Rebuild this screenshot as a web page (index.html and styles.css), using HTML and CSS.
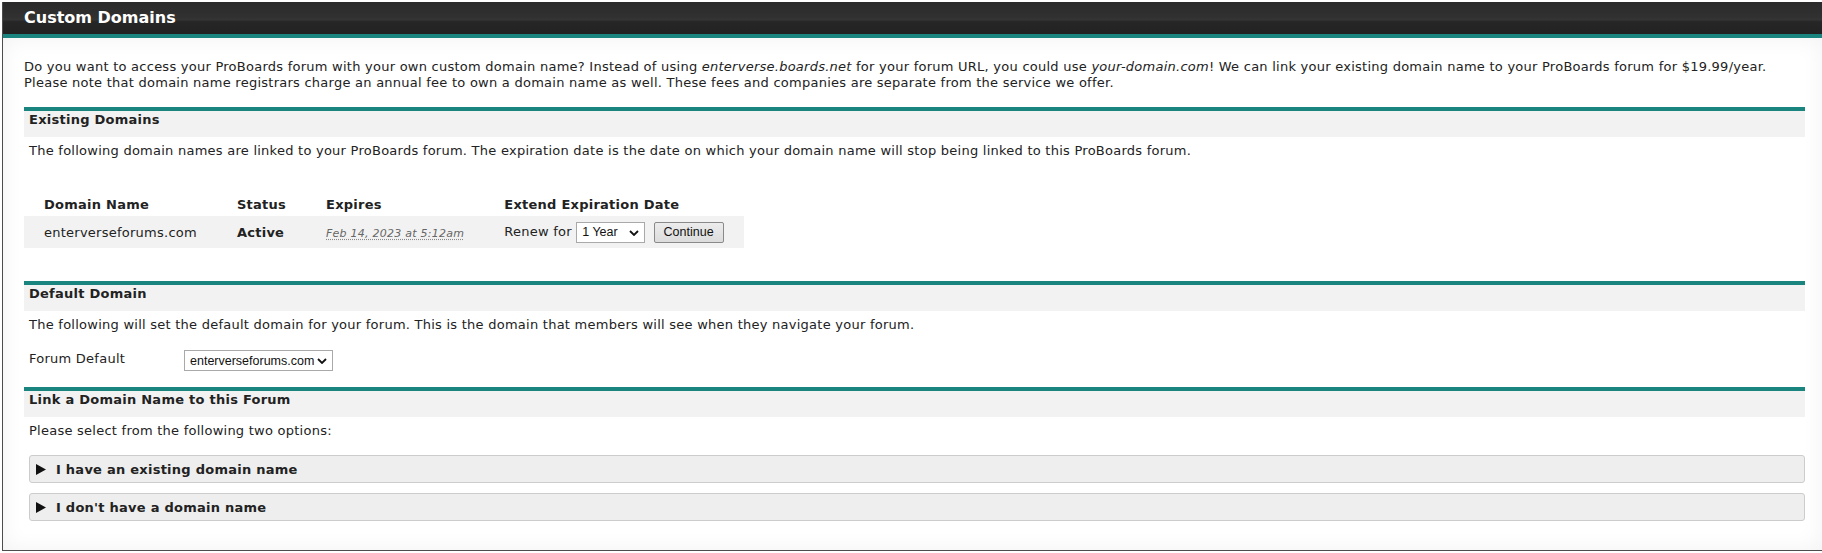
FILE: index.html
```html
<!DOCTYPE html>
<html lang="en">
<head>
<meta charset="utf-8">
<title>Custom Domains</title>
<link rel="stylesheet" href="styles.css">
</head>
<body>
<div class="panel">
  <div class="panel-head"><h1>Custom Domains</h1></div>
  <div class="panel-body">
    <p class="intro">Do you want to access your ProBoards forum with your own custom domain name? Instead of using <em>enterverse.boards.net</em> for your forum URL, you could use <em>your-domain.com</em>! We can link your existing domain name to your ProBoards forum for $19.99/year.<br>Please note that domain name registrars charge an annual fee to own a domain name as well. These fees and companies are separate from the service we offer.</p>

    <section class="block">
      <h2>Existing Domains</h2>
      <p class="desc">The following domain names are linked to your ProBoards forum. The expiration date is the date on which your domain name will stop being linked to this ProBoards forum.</p>
      <table class="domains">
        <thead>
          <tr><th>Domain Name</th><th>Status</th><th>Expires</th><th>Extend Expiration Date</th></tr>
        </thead>
        <tbody>
          <tr>
            <td>enterverseforums.com</td>
            <td class="status">Active</td>
            <td><abbr class="date" title="Feb 14, 2023 at 5:12am">Feb 14, 2023 at 5:12am</abbr></td>
            <td class="renew">
              <span class="renew-label">Renew for</span>
              <span class="sel sel-year"><select><option>1 Year</option><option>2 Years</option></select><svg class="chev" viewBox="0 0 10 6" width="10" height="6"><path d="M1 1 L5 5 L9 1" fill="none" stroke="#111" stroke-width="1.8"/></svg></span>
              <button class="btn" type="button">Continue</button>
            </td>
          </tr>
        </tbody>
      </table>
    </section>

    <section class="block">
      <h2>Default Domain</h2>
      <p class="desc">The following will set the default domain for your forum. This is the domain that members will see when they navigate your forum.</p>
      <div class="field">
        <label class="field-label">Forum Default</label>
        <span class="sel sel-domain"><select><option>enterverseforums.com</option></select><svg class="chev" viewBox="0 0 10 6" width="10" height="6"><path d="M1 1 L5 5 L9 1" fill="none" stroke="#111" stroke-width="1.8"/></svg></span>
      </div>
    </section>

    <section class="block">
      <h2>Link a Domain Name to this Forum</h2>
      <p class="desc">Please select from the following two options:</p>
      <div class="options">
        <div class="option"><svg class="arrow" viewBox="0 0 10 11" width="10" height="11"><polygon points="0,0 10,5.5 0,11" fill="#111"/></svg>I have an existing domain name</div>
        <div class="option"><svg class="arrow" viewBox="0 0 10 11" width="10" height="11"><polygon points="0,0 10,5.5 0,11" fill="#111"/></svg>I don't have a domain name</div>
      </div>
    </section>
  </div>
</div>
</body>
</html>
```

FILE: styles.css
```css
html, body {
  margin: 0;
  padding: 0;
  background: #ffffff;
  overflow: hidden;
}

body {
  font-family: "DejaVu Sans", Verdana, sans-serif;
  font-size: 13px;
  letter-spacing: 0.25px;
  color: #222222;
}

.panel {
  margin: 2px 0 0 2px;
  border-left: 1px solid #4d4d4d;
  border-bottom: 1px solid #4d4d4d;
}

.panel-head {
  height: 32px;
  background: linear-gradient(#2b2b2b 0%, #303030 45%, #343434 55%, #262626 62%, #222222 100%);
  border-bottom: 4px solid #1a857f;
  display: flex;
  align-items: center;
  padding-left: 21px;
}

.panel-head h1 {
  margin: 0;
  font-size: 16px;
  font-weight: bold;
  color: #ffffff;
  line-height: 20px;
  padding-bottom: 1px;
  letter-spacing: 0;
}

.panel-body {
  padding: 21px 17px 29px 21px;
  background: #ffffff;
  box-shadow: inset 0 0 22px rgba(0, 0, 0, 0.055);
}

.intro {
  margin: 0;
  line-height: 16px;
}

.block {
  margin-top: 16px;
}

.block h2 {
  margin: 0;
  border-top: 4px solid #1a857f;
  background: #f2f2f2;
  font-size: 13px;
  font-weight: bold;
  line-height: 16px;
  padding: 1px 5px 9px;
}

.desc {
  margin: 6px 0 0;
  padding-left: 5px;
  line-height: 16px;
}

.domains {
  margin-top: 33px;
  margin-bottom: 33px;
  border-collapse: collapse;
}

.domains th {
  text-align: left;
  font-weight: bold;
  height: 24px;
  padding: 0 20px;
  vertical-align: middle;
  white-space: nowrap;
}

.domains td {
  background: #f2f2f2;
  height: 32px;
  padding: 0 20px;
  vertical-align: middle;
  white-space: nowrap;
}

.domains .status {
  font-weight: bold;
}

.date {
  font-size: 11px;
  font-style: italic;
  color: #666666;
  text-decoration: underline dotted #888888;
  text-underline-offset: 2px;
}

.renew-label {
  margin-right: 0;
}

.sel {
  position: relative;
  display: inline-block;
  vertical-align: middle;
}

.sel select {
  appearance: none;
  -webkit-appearance: none;
  font-family: "Liberation Sans", Arial, sans-serif;
  font-size: 12.5px;
  letter-spacing: 0;
  color: #111111;
  background: #ffffff;
  border: 1px solid #a9a9a9;
  border-radius: 0;
  height: 21px;
  padding: 0 0 0 5px;
  margin: 0;
  box-sizing: border-box;
  display: block;
}

.sel-year select {
  width: 69px;
}

.sel-domain select {
  width: 149px;
}

.chev {
  position: absolute;
  right: 6px;
  top: 8px;
  pointer-events: none;
}

.btn {
  font-family: "Liberation Sans", Arial, sans-serif;
  font-size: 12.5px;
  letter-spacing: 0;
  color: #111111;
  background: linear-gradient(#ececec, #dcdcdc);
  border: 1px solid #8a8a8a;
  border-radius: 2px;
  height: 21px;
  width: 70px;
  padding: 0;
  margin-left: 4px;
  vertical-align: middle;
}

.field {
  display: flex;
  align-items: center;
  margin-top: 17px;
  padding-left: 5px;
}

.field-label {
  width: 155px;
  padding-bottom: 4px;
}

.options {
  margin-top: 16px;
  padding-left: 5px;
  display: flex;
  flex-direction: column;
  gap: 10px;
}

.option {
  height: 26px;
  background: #eeeeee;
  border: 1px solid #cccccc;
  border-radius: 3px;
  display: flex;
  align-items: center;
  font-weight: bold;
  padding-left: 6px;
}

.arrow {
  margin-right: 10px;
  flex: none;
}
```
